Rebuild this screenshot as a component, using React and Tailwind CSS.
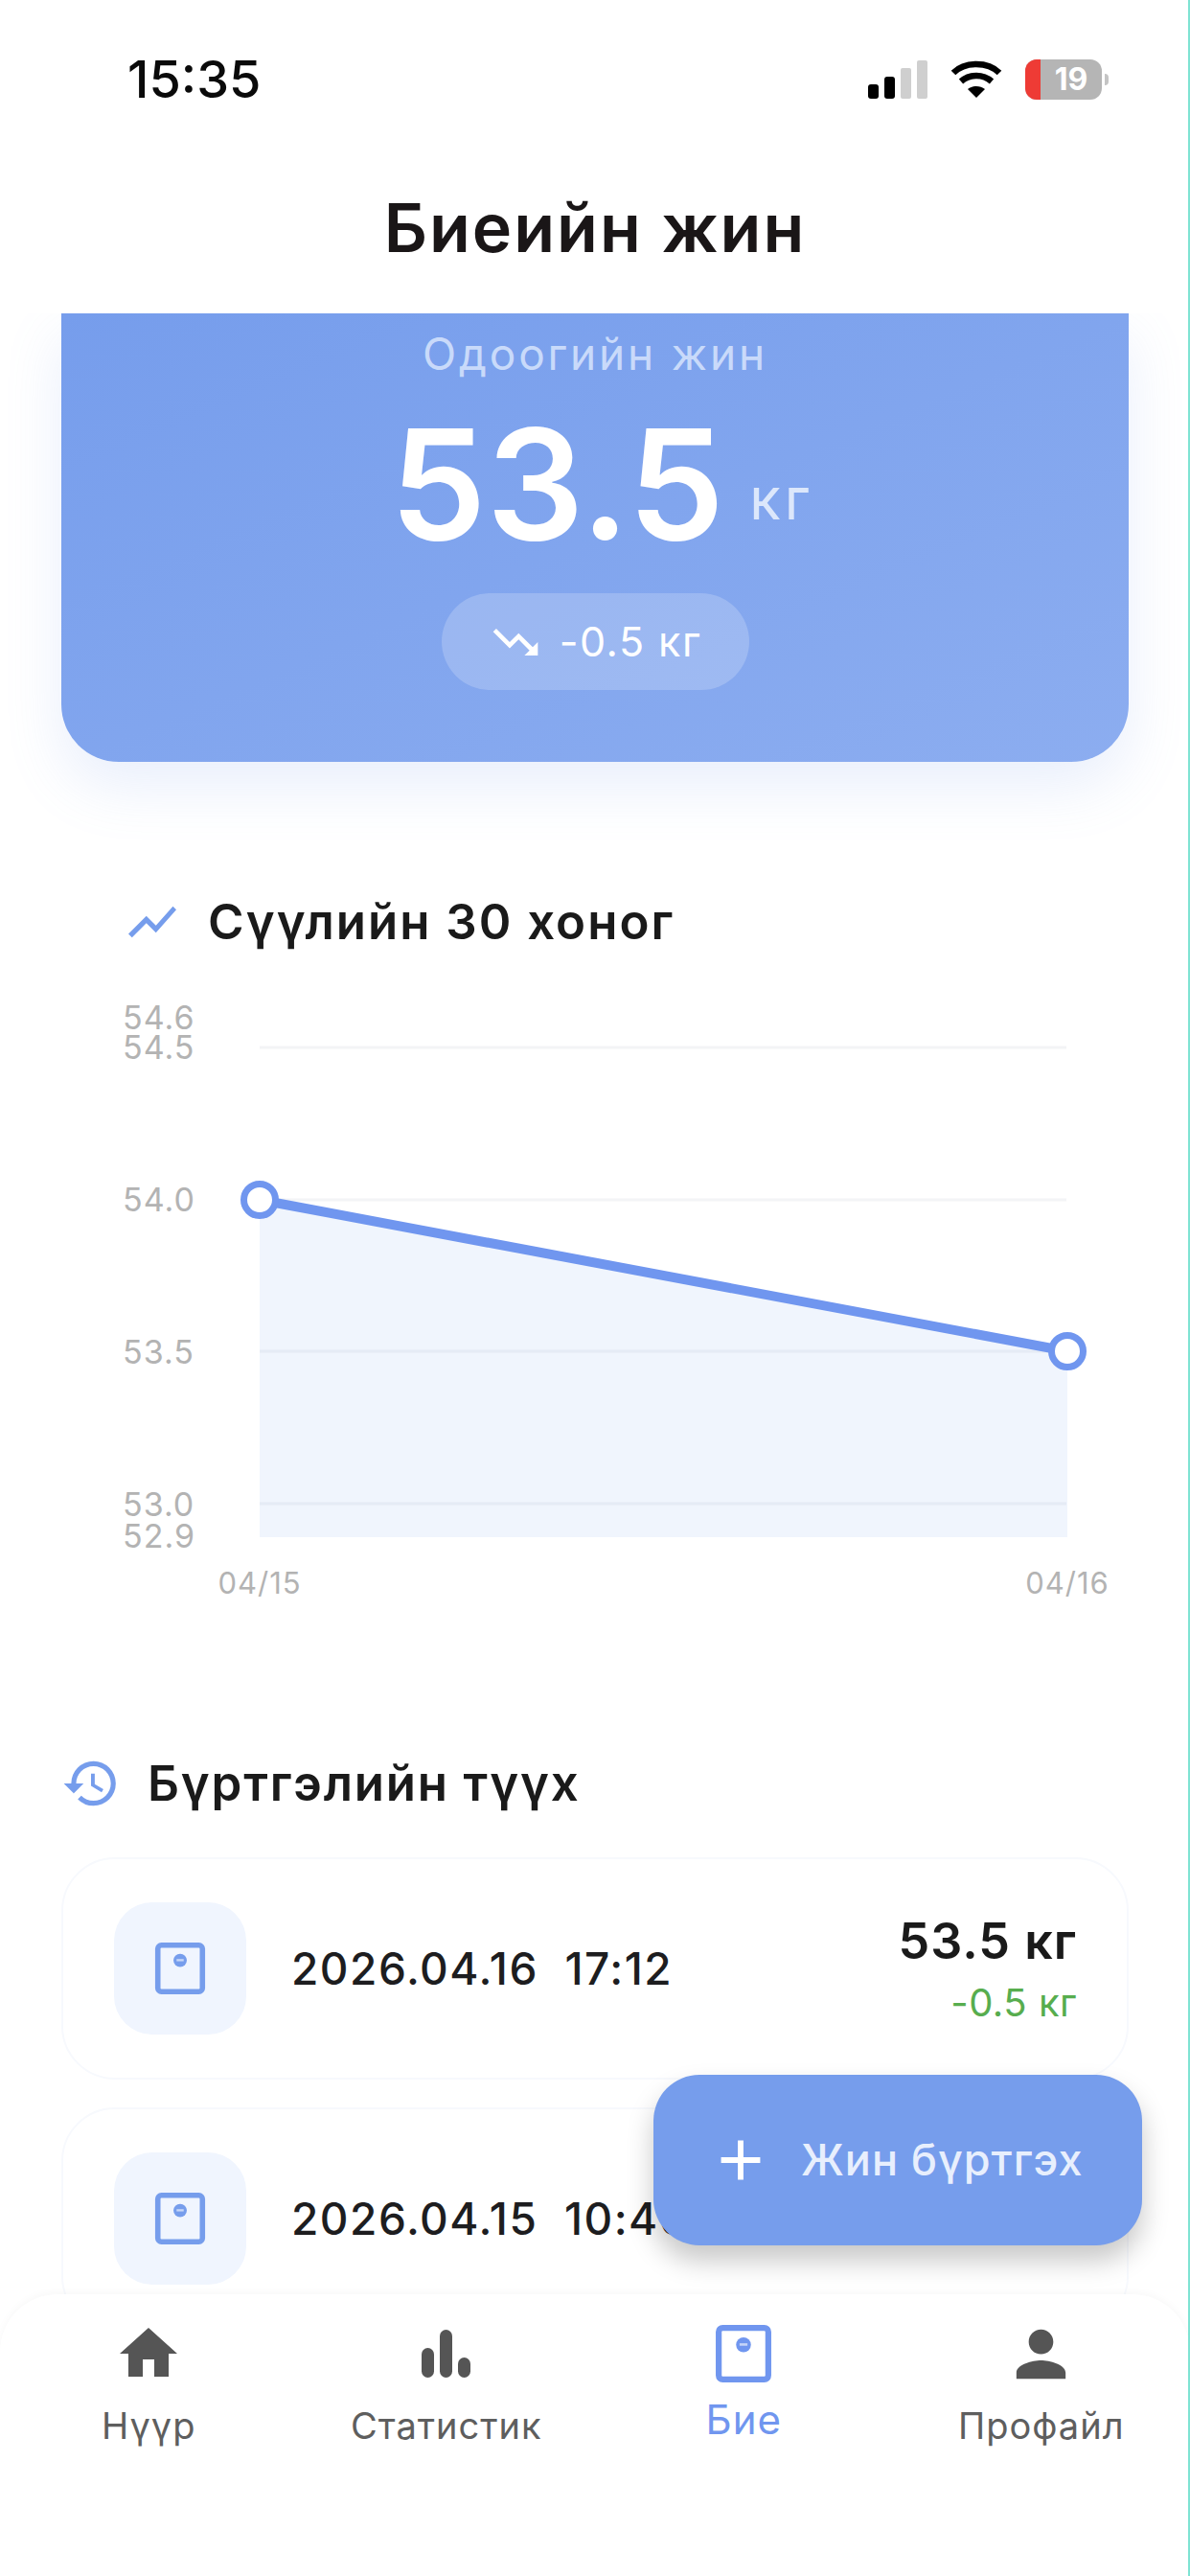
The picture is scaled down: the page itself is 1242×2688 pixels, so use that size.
import React from "react";
import { MdHome, MdPerson, MdHistory, MdShowChart, MdTrendingDown, MdAdd } from "react-icons/md";

const font = { fontFamily: "Inter, 'Noto Sans', sans-serif" };

function Scale({ className }) {
  return (
    <svg viewBox="0 0 56 58" className={className} fill="none">
      <rect x="3" y="3" width="50" height="52" rx="4" stroke="currentColor" strokeWidth="6" />
      <circle cx="28" cy="20" r="7.5" fill="currentColor" />
      <rect x="24" y="18.5" width="8" height="2.5" fill="#ffffff" opacity="0.6" />
    </svg>
  );
}

function Bars({ className }) {
  return (
    <svg viewBox="0 0 51 50" className={className} fill="currentColor">
      <rect x="0" y="19" width="13" height="31" rx="6.5" />
      <rect x="19" y="0" width="13" height="50" rx="6.5" />
      <rect x="38" y="29" width="13" height="21" rx="6.5" />
    </svg>
  );
}

function Signal() {
  return (
    <svg width="62" height="40" viewBox="0 0 62 40">
      <rect x="0" y="25" width="11" height="15" rx="3" fill="#000" />
      <rect x="17" y="17" width="11" height="23" rx="3" fill="#000" />
      <rect x="34" y="8" width="11" height="32" rx="2" fill="#cfcfcf" />
      <rect x="51" y="0" width="11" height="40" rx="2" fill="#cfcfcf" />
    </svg>
  );
}

function Wifi() {
  return (
    <svg width="54" height="40" viewBox="0 0 54 40" fill="none" stroke="#000" strokeWidth="6.5">
      <path d="M3 13 C 15 1, 39 1, 51 13" />
      <path d="M11 22 C 20 14, 34 14, 43 22" />
      <path d="M27 39 L18 30 C 23 26, 31 26, 36 30 Z" fill="#000" stroke="none" />
    </svg>
  );
}

function Battery() {
  return (
    <div className="flex items-center gap-[3px]">
      <div className="relative flex h-[42px] w-[80px] items-center justify-center overflow-hidden rounded-[12px] bg-[#b5b5b5] pl-[16px]">
        <div className="absolute bottom-0 left-0 top-0 w-[16px] bg-[#ee3b35]" />
        <span className="text-[32px] font-bold leading-none text-white">19</span>
      </div>
      <div className="h-[12px] w-[4px] rounded-r bg-[#c4c4c4]" />
    </div>
  );
}

function Chart() {
  const ys = [
    ["54.6", 1062],
    ["54.5", 1093],
    ["54.0", 1252],
    ["53.5", 1411],
    ["53.0", 1570],
    ["52.9", 1603],
  ];
  const top = 1040;
  return (
    <svg width="1242" height="640" viewBox={`0 ${top} 1242 640`} className="block">
      <g stroke="#f3f4f6" strokeWidth="3">
        <line x1="271" x2="1113" y1="1093" y2="1093" />
        <line x1="271" x2="1113" y1="1252" y2="1252" />
        <line x1="271" x2="1113" y1="1410" y2="1410" />
        <line x1="271" x2="1113" y1="1569" y2="1569" />
      </g>
      <path d="M271 1252 L1114 1410 L1114 1604 L271 1604 Z" fill="#769dec" fillOpacity="0.105" />
      <line x1="271" y1="1252" x2="1114" y2="1410" stroke="#7096ef" strokeWidth="10" />
      <circle cx="271" cy="1252" r="16.5" fill="#fff" stroke="#7096ef" strokeWidth="7" />
      <circle cx="1114" cy="1410" r="16.5" fill="#fff" stroke="#7096ef" strokeWidth="7" />
      <g fill="#b3b3b3" fontSize="34" letterSpacing="1" fontFamily="Inter, sans-serif">
        {ys.map(([t, y]) => (
          <text key={t} x="128" y={y + 12}>{t}</text>
        ))}
        <text x="271" y="1663" fontSize="31" textAnchor="middle">04/15</text>
        <text x="1114" y="1663" fontSize="31" textAnchor="middle">04/16</text>
      </g>
    </svg>
  );
}

function HistoryCard({ date, time, value, delta }) {
  return (
    <div className="flex h-[232px] shrink-0 items-center rounded-[56px] border-2 border-[#f7f9fd] bg-white pl-[53px] pr-[52px]">
      <div className="flex h-[138px] w-[138px] items-center justify-center rounded-[40px] bg-[#f0f5fe] text-[#769dec]">
        <Scale className="h-[54px] w-[54px]" />
      </div>
      <div className="ml-[47px] flex-1 whitespace-pre text-[46px] font-medium tracking-[1.5px] text-[#1d1d1f]">
        {date}  {time}
      </div>
      {value && (
        <div className="flex flex-col items-end">
          <div className="text-[52px] font-semibold leading-[60px] tracking-[1px] text-[#1a1a1a]">{value}</div>
          <div className="mt-[12px] text-[40px] leading-[44px] tracking-[0.5px] text-[#57ad4e]">{delta}</div>
        </div>
      )}
    </div>
  );
}

function NavItem({ icon, label, active }) {
  return (
    <div className={`flex flex-1 flex-col items-center ${active ? "text-[#7096ef]" : "text-[#555555]"}`}>
      <div className="flex h-[74px] items-center justify-center">{icon}</div>
      <div className={active ? "mt-[9px] text-[42px] leading-[46px] tracking-[1px]" : "mt-[15px] text-[38px] leading-[46px] tracking-[1px] text-[#5e5e5e]"}>{label}</div>
    </div>
  );
}

export default function App() {
  return (
    <div style={font} className="relative flex h-[2688px] w-[1242px] flex-col overflow-hidden bg-white">
      <header className="h-[327px] shrink-0">
        <div className="flex h-[168px] items-center justify-between pb-[2px] pl-[133px] pr-[85px]">
          <span className="text-[54px] font-medium leading-none text-[#0a0a0a]">15:35</span>
          <div className="flex items-center gap-[24px]">
            <Signal />
            <Wifi />
            <Battery />
          </div>
        </div>
        <h1 className="mt-[30px] text-center text-[70px] font-semibold leading-[80px] tracking-[2px] text-[#1a1617]">Биеийн жин</h1>
      </header>

      <main className="min-h-0 flex-1 overflow-hidden">
        <section className="mx-[64px] flex h-[468px] flex-col items-center rounded-b-[60px] bg-gradient-to-br from-[#769dec] to-[#8cadf0] shadow-[0_26px_60px_rgba(118,157,236,0.16)]">
          <div className="mt-[14px] text-[46px] leading-[56px] tracking-[2.8px] text-[#c9dafa]">Одоогийн жин</div>
          <div className="mt-[23px] flex items-center pl-[14px]">
            <span className="text-[160px] font-semibold leading-[170px] text-white">53.5</span>
            <span className="ml-[26px] mt-[30px] text-[60px] leading-none tracking-[4px] text-[#dce7fb]">кг</span>
          </div>
          <div className="mt-[29px] flex h-[101px] w-[321px] items-center justify-center gap-[18px] rounded-full bg-white/20 text-white">
            <MdTrendingDown size={56} />
            <span className="text-[43px] tracking-[1.5px]">-0.5 кг</span>
          </div>
        </section>

        <section className="mt-[132px]">
          <div className="flex h-[70px] items-center pl-[129px]">
            <MdShowChart size={60} className="text-[#769dec]" />
            <h2 className="ml-[28px] text-[51px] font-semibold tracking-[2px] text-[#1a1a1a]">Сүүлийн 30 хоног</h2>
          </div>
          <div className="mt-[43px]">
            <Chart />
          </div>
        </section>

        <section className="mx-[64px] mt-[146px]">
          <div className="flex h-[70px] items-center">
            <MdHistory size={62} className="text-[#769dec]" />
            <h2 className="ml-[28px] text-[51px] font-semibold tracking-[1.8px] text-[#1a1a1a]">Бүртгэлийн түүх</h2>
          </div>
          <div className="mt-[42px] flex flex-col gap-[29px]">
            <HistoryCard date="2026.04.16" time="17:12" value="53.5 кг" delta="-0.5 кг" />
            <HistoryCard date="2026.04.15" time="10:40" />
          </div>
        </section>
      </main>

      <button className="absolute left-[682px] top-[2165px] flex h-[178px] w-[510px] items-center rounded-[48px] bg-[#769dec] pl-[56px] text-white shadow-[0_16px_28px_rgba(0,0,0,0.22)]">
        <MdAdd size={70} />
        <span className="ml-[28px] text-[45px] font-medium tracking-[1px] text-[#e8effd]">Жин бүртгэх</span>
      </button>

      <nav className="relative z-10 flex h-[294px] shrink-0 rounded-t-[60px] bg-white pt-[25px] shadow-[0_-2px_8px_rgba(0,0,0,0.03)]">
        <NavItem label="Нүүр" icon={<MdHome size={72} />} />
        <NavItem label="Статистик" icon={<Bars className="h-[50px] w-[51px]" />} />
        <NavItem active label="Бие" icon={<Scale className="h-[60px] w-[58px]" />} />
        <NavItem label="Профайл" icon={<MdPerson size={77} />} />
      </nav>

      <div className="absolute bottom-0 right-0 top-0 z-20 w-[2px] bg-[#7fe3d3]" />
    </div>
  );
}
